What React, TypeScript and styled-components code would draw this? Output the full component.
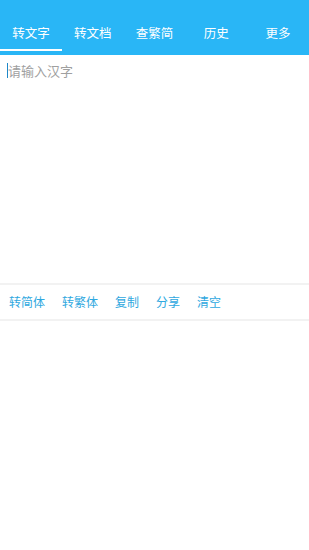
import React, { useState } from 'react';
import styled, { createGlobalStyle } from 'styled-components';

const GlobalStyle = createGlobalStyle`
    html, body {
        margin: 0;
        padding: 0;
        background: #ffffff;
        font-family: "Noto Sans CJK SC", "Noto Sans", sans-serif;
    }
`;

const Page = styled.div`
    width: 309px;
    height: 550px;
    display: flex;
    flex-direction: column;
    background: #ffffff;
`;

const Header = styled.div`
    height: 55px;
    background: #29b6f6;
    display: flex;
    align-items: flex-end;
`;

const TabBar = styled.div`
    display: flex;
    width: 100%;
    height: 32px;
`;

const Tab = styled.div<{ isActive: boolean }>`
    flex: 1;
    display: flex;
    justify-content: center;
    align-items: flex-start;
    padding-top: 2px;
    font-size: 12.5px;
    line-height: 16px;
    color: #ffffff;
    border-bottom: 2px solid ${({ isActive }) => (isActive ? '#ffffff' : 'transparent')};
    box-sizing: border-box;
    height: 28px;
`;

const Editor = styled.div`
    height: 228px;
    padding: 7px 8px 0 7px;
    box-sizing: border-box;
    display: flex;
    align-items: flex-start;
`;

const Caret = styled.span`
    width: 1px;
    height: 15px;
    margin-top: 1px;
    background: #1e88c8;
`;

const Placeholder = styled.span`
    font-size: 13px;
    line-height: 17px;
    color: #a0a0a0;
`;

const Toolbar = styled.div`
    display: flex;
    align-items: center;
    gap: 17px;
    height: 34px;
    padding-left: 9px;
    border-top: 2px solid #f2f2f2;
    border-bottom: 2px solid #f2f2f2;
`;

const ToolButton = styled.span`
    font-size: 12px;
    line-height: 16px;
    color: #2ea8e0;
`;

const tabs = ['转文字', '转文档', '查繁简', '历史', '更多'];
const tools = ['转简体', '转繁体', '复制', '分享', '清空'];

function App() {
    const [active, setActive] = useState(0);

    return (
        <Page>
            <GlobalStyle />
            <Header>
                <TabBar>
                    {tabs.map((t, i) => (
                        <Tab key={t} isActive={active === i} onClick={() => setActive(i)}>
                            {t}
                        </Tab>
                    ))}
                </TabBar>
            </Header>
            <Editor>
                <Caret />
                <Placeholder>请输入汉字</Placeholder>
            </Editor>
            <Toolbar>
                {tools.map((t) => (
                    <ToolButton key={t}>{t}</ToolButton>
                ))}
            </Toolbar>
        </Page>
    );
}

export default App;
